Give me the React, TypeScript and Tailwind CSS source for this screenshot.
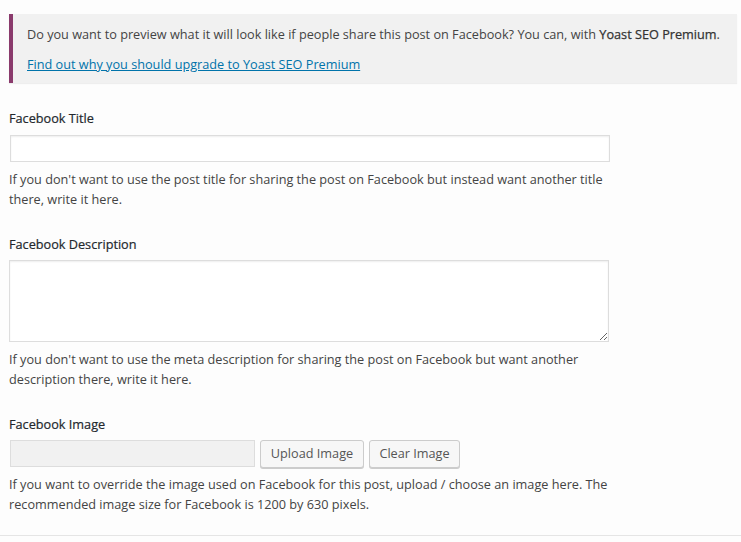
import React from 'react';

const font = { fontFamily: '"Open Sans", "Segoe UI", sans-serif' };

const Label: React.FC<{ children: React.ReactNode }> = ({ children }) => (
  <div className="text-[12.7px] leading-[20px] text-[#23282d] [-webkit-text-stroke:0.2px_#23282d]">{children}</div>
);

const Help: React.FC<{ children: React.ReactNode }> = ({ children }) => (
  <p className="text-[12.7px] leading-[19.5px] text-[#444] w-[610px]">{children}</p>
);

export default function App() {
  return (
    <div className="min-h-[542px] w-[741px] bg-[#fdfdfd] antialiased" style={font}>
      {/* Premium notice */}
      <div className="pt-[14px] pl-[9px] pr-[4px]">
        <div className="border-l-4 border-[#8a3a6c] bg-[#f1f1f1] pl-[14px] pt-[10px] pb-[9px] text-[12.7px] text-[#444] shadow-[0_1px_1px_rgba(0,0,0,0.06)]">
          <div className="leading-[20px] whitespace-nowrap">
            Do you want to preview what it will look like if people share this post on Facebook? You can, with{' '}
            <span className="text-[#333] [-webkit-text-stroke:0.25px_#333]">Yoast SEO Premium</span>.
          </div>
          <a href="#" className="block mt-[10px] leading-[20px] text-[#0073aa] underline">
            Find out why you should upgrade to Yoast SEO Premium
          </a>
        </div>
      </div>

      <div className="pl-[9px] pt-[25px]">
        {/* Title */}
        <Label>Facebook Title</Label>
        <input
          type="text"
          className="mt-[7px] ml-px block w-[600px] h-[27px] border border-[#ddd] bg-white shadow-[inset_0_1px_2px_rgba(0,0,0,0.07)] outline-none"
        />
        <div className="mt-[8px]">
          <Help>
            If you don't want to use the post title for sharing the post on Facebook but instead want another title
            there, write it here.
          </Help>
        </div>

        {/* Description */}
        <div className="mt-[25px]">
          <Label>Facebook Description</Label>
        </div>
        <textarea className="mt-[6px] block w-[600px] h-[82px] border border-[#ddd] bg-white shadow-[inset_0_1px_2px_rgba(0,0,0,0.07)] outline-none resize-y" />
        <div className="mt-[8px]">
          <Help>
            If you don't want to use the meta description for sharing the post on Facebook but want another
            description there, write it here.
          </Help>
        </div>

        {/* Image */}
        <div className="mt-[25px]">
          <Label>Facebook Image</Label>
        </div>
        <div className="mt-[6px] flex items-start gap-[5px]">
          <div className="ml-px w-[245px] h-[27px] border border-[#ddd] bg-[#f1f1f1]" />
          <button className="h-[28px] w-[104px] border border-[#ccc] rounded-[3px] bg-[#f7f7f7] text-[12.7px] text-[#555] shadow-[0_1px_0_#ccc]">
            Upload Image
          </button>
          <button className="h-[28px] w-[91px] border border-[#ccc] rounded-[3px] bg-[#f7f7f7] text-[12.7px] text-[#555] shadow-[0_1px_0_#ccc]">
            Clear Image
          </button>
        </div>
        <div className="mt-[7px]">
          <Help>
            If you want to override the image used on Facebook for this post, upload / choose an image here. The
            recommended image size for Facebook is 1200 by 630 pixels.
          </Help>
        </div>
      </div>

      <div className="mt-[21px] border-t border-[#e5e5e5]" />
    </div>
  );
}
